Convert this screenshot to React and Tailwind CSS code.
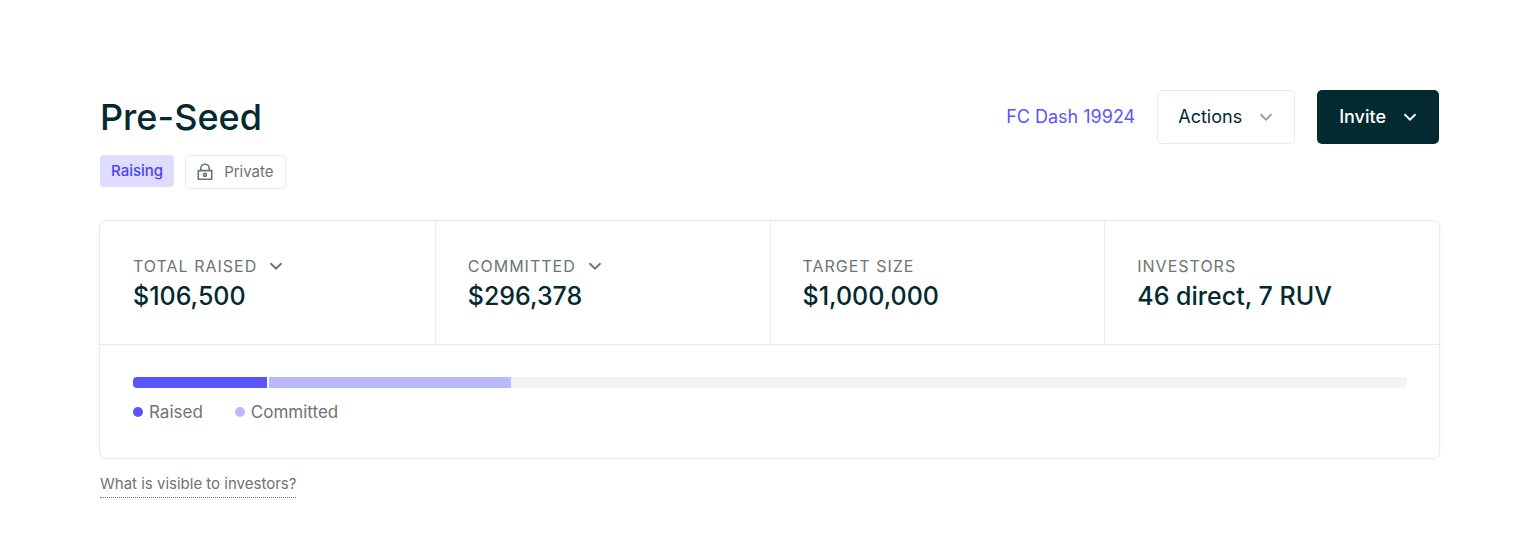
import React from "react";

const TARGET = 1000000;

const segments = [
    { label: "Raised", amount: 106500, color: "bg-[#5a55ff]" },
    { label: "Committed", amount: 189878, color: "bg-[#bbb8ff]" },
];

const stats = [
    { label: "Total raised", value: "$106,500", menu: true },
    { label: "Committed", value: "$296,378", menu: true },
    { label: "Target size", value: "$1,000,000" },
    { label: "Investors", value: "46 direct, 7 RUV" },
];

function Chevron({ className }) {
    return (
        <svg className={className} width="14" height="8" viewBox="0 0 14 8" fill="none" stroke="currentColor" strokeWidth="1.9" aria-hidden="true">
            <path d="M1.5 1.2 7 6.6l5.5-5.4" />
        </svg>
    );
}

function LockIcon() {
    return (
        <svg width="16" height="18" viewBox="0 0 16 18" fill="none" stroke="currentColor" strokeWidth="1.6" aria-hidden="true">
            <path d="M1.3 7.6h13.4v8.6H1.3z" />
            <path d="M3.8 7.4V5.4a4.2 4.2 0 0 1 8.4 0v2" />
            <circle cx="8" cy="11.9" r="1.5" />
        </svg>
    );
}

function Header() {
    return (
        <header className="flex flex-wrap items-center justify-between gap-4">
            <h1 className="text-4xl leading-[54px] font-medium">Pre-Seed</h1>
            <div className="flex flex-wrap items-center gap-[22px]">
                <a href="#dash" className="text-lg text-[#5a55ff]">FC Dash 19924</a>
                <button type="button" className="flex h-[54px] items-center gap-[17px] rounded-[5px] border border-[#ebebeb] px-5 text-lg">
                    Actions
                    <Chevron className="mr-px text-[#9a9f9d]" />
                </button>
                <button type="button" className="flex h-[54px] items-center gap-[17px] rounded-[5px] bg-[#022a30] px-[22px] text-lg font-medium text-white">
                    Invite
                    <Chevron />
                </button>
            </div>
        </header>
    );
}

function Stat({ label, value, menu }) {
    return (
        <div className="border-l border-[#ebebeb] px-8 pt-[33px] pb-[30px] first:border-transparent">
            <dt className="flex items-center text-base leading-6 tracking-[1px] text-[#6b7572] uppercase">
                {label}
                {menu && (
                    <button type="button" aria-label={`${label} options`} className="ml-3">
                        <Chevron />
                    </button>
                )}
            </dt>
            <dd className="text-[25px] leading-9 font-medium">{value}</dd>
        </div>
    );
}

function Progress() {
    return (
        <div className="border-t border-[#ebebeb] px-8 pt-8 pb-[33px]">
            <div className="ml-px flex h-[11px] overflow-hidden rounded bg-[#f3f3f2]">
                {segments.map((s) => (
                    <div key={s.label} className="border-r-2 border-white last:border-r-0" style={{ width: `${(s.amount / TARGET) * 100}%` }}>
                        <div className={`h-full ${s.color}`} />
                    </div>
                ))}
            </div>
            <ul className="mt-[11px] ml-px flex gap-8">
                {segments.map((s) => (
                    <li key={s.label} className="flex items-center gap-[6px] text-[17px] leading-[26px] text-[#6b7572]">
                        <span className={`size-[10px] rounded-full ${s.color}`} />
                        {s.label}
                    </li>
                ))}
            </ul>
        </div>
    );
}

function App() {
    return (
        <main className="bg-white pt-[90px] pr-[101px] pb-9 pl-[100px] font-['Inter',sans-serif] text-[#022a30]">
            <Header />
            <div className="mt-[11px] flex items-start gap-[11px] text-[15px]">
                <span className="rounded bg-[#dedcff] px-[11px] leading-8 font-medium text-[#4a43ff]">Raising</span>
                <span className="flex items-center gap-[11px] rounded border border-[#ebebeb] px-[11px] leading-8 text-[#6b7572]">
                    <LockIcon />
                    Private
                </span>
            </div>
            <section className="-mx-px mt-[31px] rounded-lg border border-[#ebebeb] shadow-[0_0_2px_#00000014]">
                <dl className="grid grid-cols-4">
                    {stats.map((s) => (
                        <Stat key={s.label} {...s} />
                    ))}
                </dl>
                <Progress />
            </section>
            <a href="#visibility" className="mt-3 inline-block border-b border-dotted border-[#6b7572] text-[15px] leading-[26px] text-[#6b7572]">
                What is visible to investors?
            </a>
        </main>
    );
}

export default App;
